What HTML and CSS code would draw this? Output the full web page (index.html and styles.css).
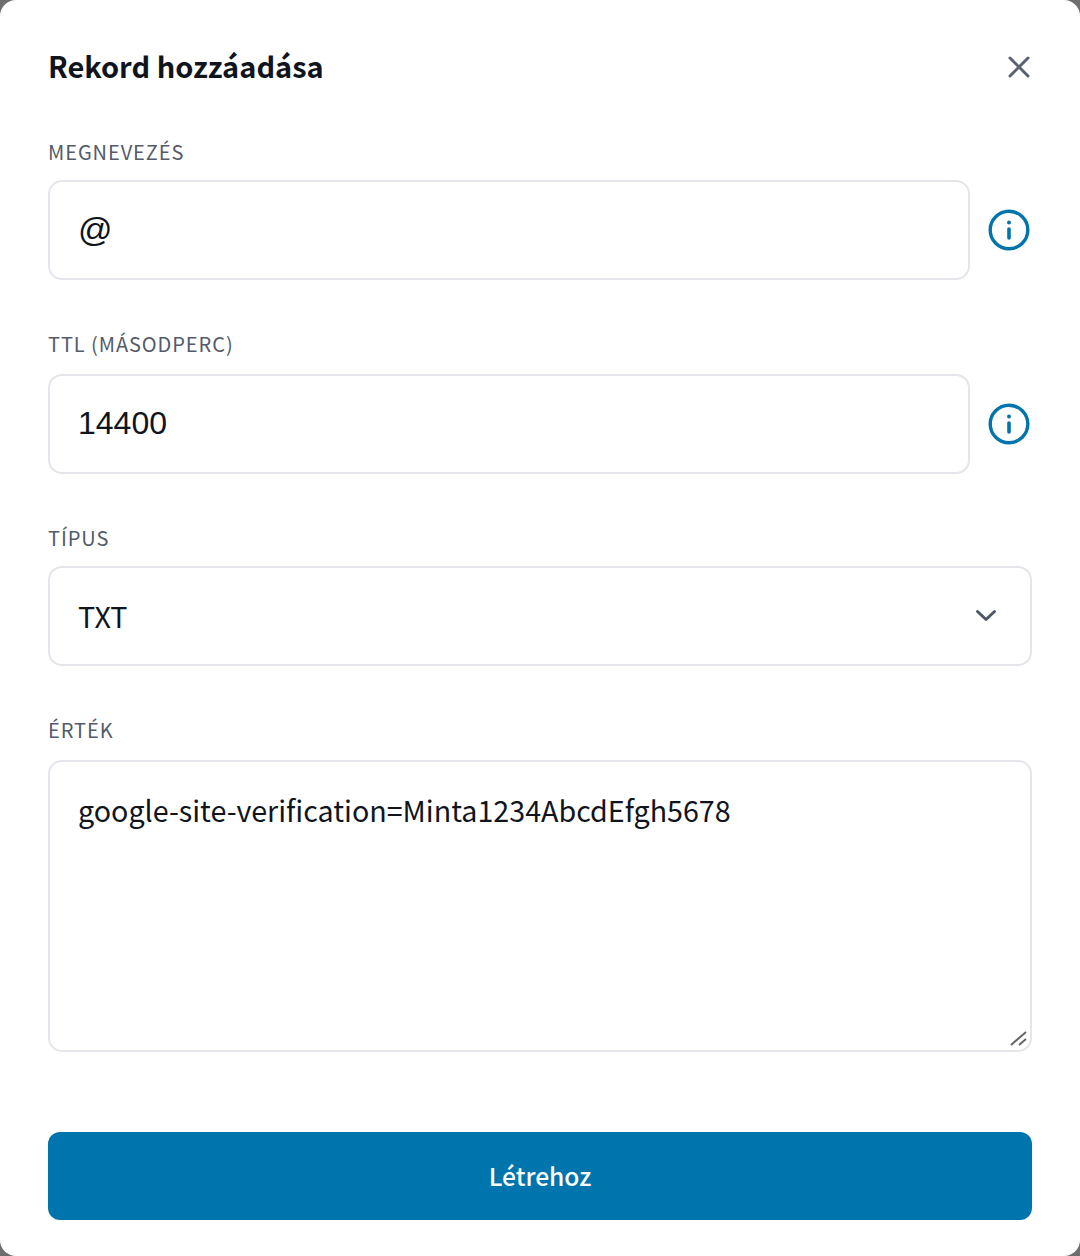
FILE: index.html
```html
<!doctype html>
<html lang="hu">
<head>
  <meta charset="UTF-8">
  <title>Rekord hozzáadása</title>
  <link rel="stylesheet" href="styles.css">
</head>
<body>
  <div class="modal">
    <div class="modal-header">
      <h1 class="modal-title">Rekord hozzáadása</h1>
      <svg class="icon-close" width="32" height="32" viewBox="0 0 32 32" fill="none">
        <path d="M7 8 25 26M25 8 7 26" stroke="#5a6170" stroke-width="3" stroke-linecap="round"/>
      </svg>
    </div>

    <div class="field">
      <label class="label">Megnevezés</label>
      <div class="row">
        <input class="control control-plain control-at" type="text" value="@">
        <svg class="icon-info" width="44" height="44" viewBox="0 0 44 44" fill="none">
          <circle cx="22" cy="22" r="18.8" stroke="#0075ad" stroke-width="3.4"/>
          <circle cx="22" cy="14.5" r="2" fill="#0075ad"/>
          <path d="M22 21v9" stroke="#0075ad" stroke-width="3.6" stroke-linecap="round"/>
        </svg>
      </div>
    </div>

    <div class="field field-wide-gap">
      <label class="label">TTL (másodperc)</label>
      <div class="row">
        <input class="control control-plain" type="text" value="14400">
        <svg class="icon-info" width="44" height="44" viewBox="0 0 44 44" fill="none">
          <circle cx="22" cy="22" r="18.8" stroke="#0075ad" stroke-width="3.4"/>
          <circle cx="22" cy="14.5" r="2" fill="#0075ad"/>
          <path d="M22 21v9" stroke="#0075ad" stroke-width="3.6" stroke-linecap="round"/>
        </svg>
      </div>
    </div>

    <div class="field">
      <label class="label">Típus</label>
      <div class="control-wrap">
        <select class="control select">
          <option>TXT</option>
        </select>
        <svg class="icon-chevron" width="24" height="24" viewBox="0 0 24 24" fill="none">
          <path d="M3.5 7.5 12 15.5 20.5 7.5" stroke="#4f5867" stroke-width="3" stroke-linecap="round" stroke-linejoin="round"/>
        </svg>
      </div>
    </div>

    <div class="field field-wide-gap">
      <label class="label">Érték</label>
      <div class="control-wrap">
        <textarea class="control textarea">google-site-verification=Minta1234AbcdEfgh5678</textarea>
        <svg class="icon-resize" width="20" height="18" viewBox="0 0 20 18" fill="none">
          <path d="M2 16 17 3M10 16 17 10" stroke="#666" stroke-width="2"/>
        </svg>
      </div>
    </div>

    <button class="btn-primary" type="button">Létrehoz</button>
  </div>
</body>
</html>
```

FILE: styles.css
```css
* {
    box-sizing: border-box;
}

html, body {
    height: 100%;
}

body {
    margin: 0;
    background: #6e6e6e;
    font-family: "Noto Sans CJK SC", "Noto Sans", sans-serif;
    color: #10151d;
}

.modal {
    height: 1256px;
    background: #fff;
    border-radius: 16px;
    padding: 44px 48px 36px;
    display: flex;
    flex-direction: column;
}

.modal-header {
    display: flex;
    justify-content: space-between;
    align-items: center;
    height: 44px;
    margin-bottom: 52px;
}

.modal-title {
    margin: -2px 0 0;
    font-size: 29px;
    font-weight: 700;
}

.icon-close {
    margin-right: -3px;
}

.field {
    display: flex;
    flex-direction: column;
    margin-bottom: 52px;
}

.label {
    font-size: 20px;
    line-height: 24px;
    height: 24px;
    margin-bottom: 16px;
    text-transform: uppercase;
    letter-spacing: 0.93px;
    color: #535b6b;
}

.field-wide-gap .label {
    margin-bottom: 18px;
}

.row {
    display: flex;
    align-items: center;
}

.control {
    display: block;
    width: 100%;
    height: 100px;
    padding: 0 28px;
    border: 2px solid #e5e6ec;
    border-radius: 14px;
    background: #fff;
    font-family: inherit;
    font-size: 28.65px;
    color: #10151d;
    outline: none;
}

.row .control {
    width: 922px;
}

.control-plain {
    font-family: "Liberation Sans", sans-serif;
    font-size: 32px;
    padding-bottom: 2px;
}

.control-at {
    font-size: 34px;
}

.icon-info {
    margin-left: 17px;
}

.control-wrap {
    position: relative;
}

.select {
    appearance: none;
    -webkit-appearance: none;
    padding-bottom: 2px;
}

.icon-chevron {
    position: absolute;
    right: 34px;
    top: 38px;
}

.textarea {
    height: 292px;
    padding: 26px 28px;
    line-height: 44px;
    resize: none;
}

.icon-resize {
    position: absolute;
    right: 3px;
    bottom: 5px;
}

.btn-primary {
    margin-top: auto;
    height: 88px;
    padding-bottom: 4px;
    border: none;
    border-radius: 12px;
    background: #0075ad;
    color: #fff;
    font-family: inherit;
    font-size: 24.6px;
    font-weight: 500;
}
```
